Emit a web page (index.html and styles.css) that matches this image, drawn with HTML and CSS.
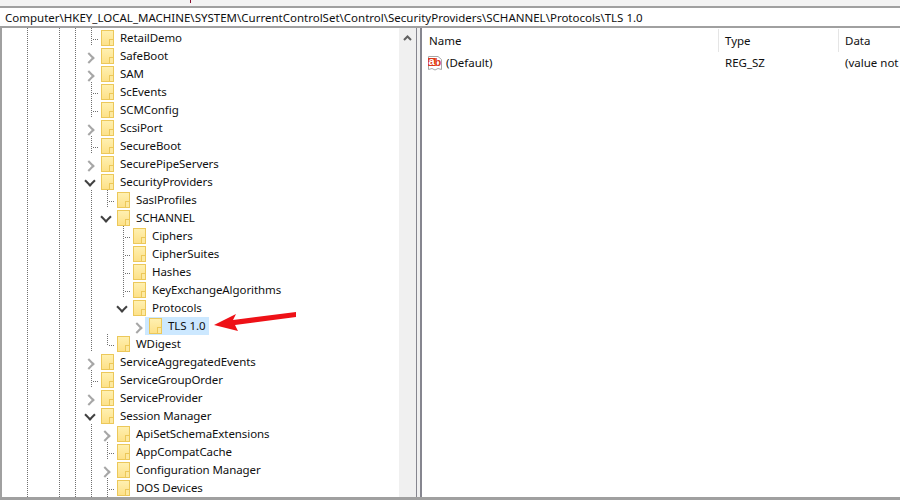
FILE: index.html
```html
<!DOCTYPE html>
<html lang="en">
<head>
<meta charset="utf-8">
<title>Registry Editor</title>
<link rel="stylesheet" href="styles.css">
</head>
<body>
<div class="app">
  <div class="topband"><i class="topmark"></i></div>
  <div class="address">Computer\HKEY_LOCAL_MACHINE\SYSTEM\CurrentControlSet\Control\SecurityProviders\SCHANNEL\Protocols\TLS 1.0</div>
  <div class="main">
    <div class="tree">
      <div class="row"><i class="c g"></i><i class="c"></i><i class="c g"></i><i class="c g"></i><i class="c e"></i><span class="folder"></span><span class="name">RetailDemo</span></div>
      <div class="row"><i class="c g"></i><i class="c"></i><i class="c g"></i><i class="c g"></i><i class="c a"></i><span class="folder"></span><span class="name">SafeBoot</span></div>
      <div class="row"><i class="c g"></i><i class="c"></i><i class="c g"></i><i class="c g"></i><i class="c a"></i><span class="folder"></span><span class="name">SAM</span></div>
      <div class="row"><i class="c g"></i><i class="c"></i><i class="c g"></i><i class="c g"></i><i class="c e"></i><span class="folder"></span><span class="name">ScEvents</span></div>
      <div class="row"><i class="c g"></i><i class="c"></i><i class="c g"></i><i class="c g"></i><i class="c e"></i><span class="folder"></span><span class="name">SCMConfig</span></div>
      <div class="row"><i class="c g"></i><i class="c"></i><i class="c g"></i><i class="c g"></i><i class="c a"></i><span class="folder"></span><span class="name">ScsiPort</span></div>
      <div class="row"><i class="c g"></i><i class="c"></i><i class="c g"></i><i class="c g"></i><i class="c e"></i><span class="folder"></span><span class="name">SecureBoot</span></div>
      <div class="row"><i class="c g"></i><i class="c"></i><i class="c g"></i><i class="c g"></i><i class="c a"></i><span class="folder"></span><span class="name">SecurePipeServers</span></div>
      <div class="row"><i class="c g"></i><i class="c"></i><i class="c g"></i><i class="c g"></i><i class="c d"></i><span class="folder"></span><span class="name">SecurityProviders</span></div>
      <div class="row"><i class="c g"></i><i class="c"></i><i class="c g"></i><i class="c g"></i><i class="c g"></i><i class="c e"></i><span class="folder"></span><span class="name">SaslProfiles</span></div>
      <div class="row"><i class="c g"></i><i class="c"></i><i class="c g"></i><i class="c g"></i><i class="c g"></i><i class="c d"></i><span class="folder"></span><span class="name">SCHANNEL</span></div>
      <div class="row"><i class="c g"></i><i class="c"></i><i class="c g"></i><i class="c g"></i><i class="c g"></i><i class="c"></i><i class="c e"></i><span class="folder"></span><span class="name">Ciphers</span></div>
      <div class="row"><i class="c g"></i><i class="c"></i><i class="c g"></i><i class="c g"></i><i class="c g"></i><i class="c"></i><i class="c e"></i><span class="folder"></span><span class="name">CipherSuites</span></div>
      <div class="row"><i class="c g"></i><i class="c"></i><i class="c g"></i><i class="c g"></i><i class="c g"></i><i class="c"></i><i class="c e"></i><span class="folder"></span><span class="name">Hashes</span></div>
      <div class="row"><i class="c g"></i><i class="c"></i><i class="c g"></i><i class="c g"></i><i class="c g"></i><i class="c"></i><i class="c e"></i><span class="folder"></span><span class="name">KeyExchangeAlgorithms</span></div>
      <div class="row"><i class="c g"></i><i class="c"></i><i class="c g"></i><i class="c g"></i><i class="c g"></i><i class="c"></i><i class="c d"></i><span class="folder"></span><span class="name">Protocols</span></div>
      <div class="row"><i class="c g"></i><i class="c"></i><i class="c g"></i><i class="c g"></i><i class="c g"></i><i class="c"></i><i class="c"></i><i class="c a"></i><span class="selected"><span class="folder"></span><span class="name">TLS 1.0</span></span></div>
      <div class="row"><i class="c g"></i><i class="c"></i><i class="c g"></i><i class="c g"></i><i class="c g"></i><i class="c l"></i><span class="folder"></span><span class="name">WDigest</span></div>
      <div class="row"><i class="c g"></i><i class="c"></i><i class="c g"></i><i class="c g"></i><i class="c a"></i><span class="folder"></span><span class="name">ServiceAggregatedEvents</span></div>
      <div class="row"><i class="c g"></i><i class="c"></i><i class="c g"></i><i class="c g"></i><i class="c e"></i><span class="folder"></span><span class="name">ServiceGroupOrder</span></div>
      <div class="row"><i class="c g"></i><i class="c"></i><i class="c g"></i><i class="c g"></i><i class="c a"></i><span class="folder"></span><span class="name">ServiceProvider</span></div>
      <div class="row"><i class="c g"></i><i class="c"></i><i class="c g"></i><i class="c g"></i><i class="c d"></i><span class="folder"></span><span class="name">Session Manager</span></div>
      <div class="row"><i class="c g"></i><i class="c"></i><i class="c g"></i><i class="c g"></i><i class="c g"></i><i class="c a"></i><span class="folder"></span><span class="name">ApiSetSchemaExtensions</span></div>
      <div class="row"><i class="c g"></i><i class="c"></i><i class="c g"></i><i class="c g"></i><i class="c g"></i><i class="c e"></i><span class="folder"></span><span class="name">AppCompatCache</span></div>
      <div class="row"><i class="c g"></i><i class="c"></i><i class="c g"></i><i class="c g"></i><i class="c g"></i><i class="c a"></i><span class="folder"></span><span class="name">Configuration Manager</span></div>
      <div class="row"><i class="c g"></i><i class="c"></i><i class="c g"></i><i class="c g"></i><i class="c g"></i><i class="c e"></i><span class="folder"></span><span class="name">DOS Devices</span></div>
      <div class="row"><i class="c g"></i><i class="c"></i><i class="c g"></i><i class="c g"></i><i class="c g"></i><i class="c e"></i><span class="folder"></span></div>
    </div>
    <div class="scrollbar"><svg class="up" width="9" height="6" viewBox="0 0 9 6"><path d="M1 5 4.5 1.5 8 5" fill="none" stroke="#606060" stroke-width="2"/></svg></div>
    <div class="splitter"></div>
    <div class="values">
      <div class="header">
        <span class="col col-name">Name</span>
        <span class="col col-type">Type</span>
        <span class="col col-data">Data</span>
      </div>
      <div class="value">
        <span class="cell col-name">
          <svg class="ab" width="16" height="16" viewBox="0 0 16 16"><path d="M1.5 1.5H11L14.5 4.5V14.5L11 13.5 8 15 5 13.5 1.5 14.5Z" fill="#fff" stroke="#a8a8a8"/><rect x="1" y="3" width="7" height="8" fill="#d9381e"/><text x="1.5" y="10" class="ab-a">a</text><text x="7.6" y="10.5" class="ab-b">b</text></svg>
          (Default)
        </span>
        <span class="cell col-type">REG_SZ</span>
        <span class="cell col-data">(value not set)</span>
      </div>
    </div>
  </div>
  <svg class="callout" width="900" height="500" viewBox="0 0 900 500"><path d="M214 325 236 314 233 320 296 312 296 317 235 325 238 331Z" fill="#ee1117"/></svg>
</div>
</body>
</html>
```

FILE: styles.css
```css
* { box-sizing: border-box; }
html, body { margin: 0; height: 100%; background: #fff; }
body { overflow: hidden; font: 11.5px/18px "Noto Sans", "Open Sans", sans-serif; color: #101010; }
.app { position: relative; width: 900px; height: 500px; display: flex; flex-direction: column; overflow: hidden; border-bottom: 3px solid #a0a0a0; }
.topband { height: 6px; flex: none; background: #f3f3f3; position: relative; }
.topmark { position: absolute; left: 190px; top: 0; width: 1px; height: 3px; background: #8a1030; }
.address { height: 22px; flex: none; padding: 1px 5px 0; background: #fff; border-top: 2px solid #a0a0a0; border-bottom: 2px solid #a0a0a0; white-space: nowrap; overflow: hidden; line-height: 17px; }
.main { flex: 1; display: flex; min-height: 0; border-left: 2px solid #a0a0a0; }
.tree { width: 397px; flex: none; padding-left: 17px; overflow: hidden; }
.row { display: flex; height: 18px; align-items: flex-start; white-space: nowrap; }
.c { display: block; width: 16px; height: 18px; flex: none; position: relative; }
.g, .e { background: repeating-linear-gradient(to bottom, #707070 0 1px, transparent 1px 2px) 8px 0 / 1px 100% no-repeat; }
.l { background: repeating-linear-gradient(to bottom, #707070 0 1px, transparent 1px 2px) 8px 0 / 1px 11px no-repeat; }
.e::after, .l::after { content: ""; position: absolute; left: 9px; top: 11px; width: 7px; height: 1px; background: repeating-linear-gradient(to right, transparent 0 1px, #707070 1px 2px); }
.a::after, .d::after { content: ""; position: absolute; width: 6px; height: 6px; border-top: 2px solid #a6a6a6; border-right: 2px solid #a6a6a6; }
.a::after { left: 2px; top: 8px; transform: rotate(45deg); }
.d::after { left: 3px; top: 5px; transform: rotate(135deg); border-color: #404040; }
.folder { display: block; width: 13px; height: 16px; flex: none; margin: 2px 0 0 2px; position: relative; border: 1px solid #ecc85a; background: linear-gradient(to bottom, #fff0b0, #fde189); }
.folder::after { content: ""; position: absolute; right: -1px; bottom: -1px; width: 3px; height: 5px; background: #fde9a0; border: 1px solid #ecc85a; }
.name { display: block; margin: 1px 0 0 6px; letter-spacing: -0.08px; }
.selected { display: flex; height: 18px; margin: 1px 0 0 -2px; padding: 0 4px 0 2px; background: #cce8ff; }
.selected .folder { margin-top: 1px; }
.selected .name { margin-top: 0; }
.scrollbar { width: 17px; flex: none; background: #f0f0f0; display: flex; justify-content: center; padding-top: 7px; align-items: flex-start; }
.splitter { width: 6px; flex: none; background: #f0f0f0; border-left: 1px solid #86868f; border-right: 2px solid #86868f; }
.values { flex: 1; min-width: 0; overflow: hidden; }
.header { display: flex; height: 25px; padding-top: 1px; }
.col { display: block; height: 23px; padding-top: 3px; border-right: 1px solid #e5e5e5; }
.value { display: flex; height: 22px; }
.cell { display: flex; align-items: center; gap: 3px; height: 20px; white-space: nowrap; }
.col-name { width: 297px; flex: none; padding-left: 7px; }
.col-type { width: 120px; flex: none; padding-left: 6px; }
.col-data { flex: 1; padding-left: 6px; border-right: 0; }
.cell.col-name { padding-left: 5px; }
.ab { flex: none; }
.ab-a { font: bold 11px "Liberation Sans", sans-serif; fill: #fff; }
.ab-b { font: bold 11px "Liberation Sans", sans-serif; fill: #d9381e; }
.callout { position: absolute; left: 0; top: 0; pointer-events: none; }
```
